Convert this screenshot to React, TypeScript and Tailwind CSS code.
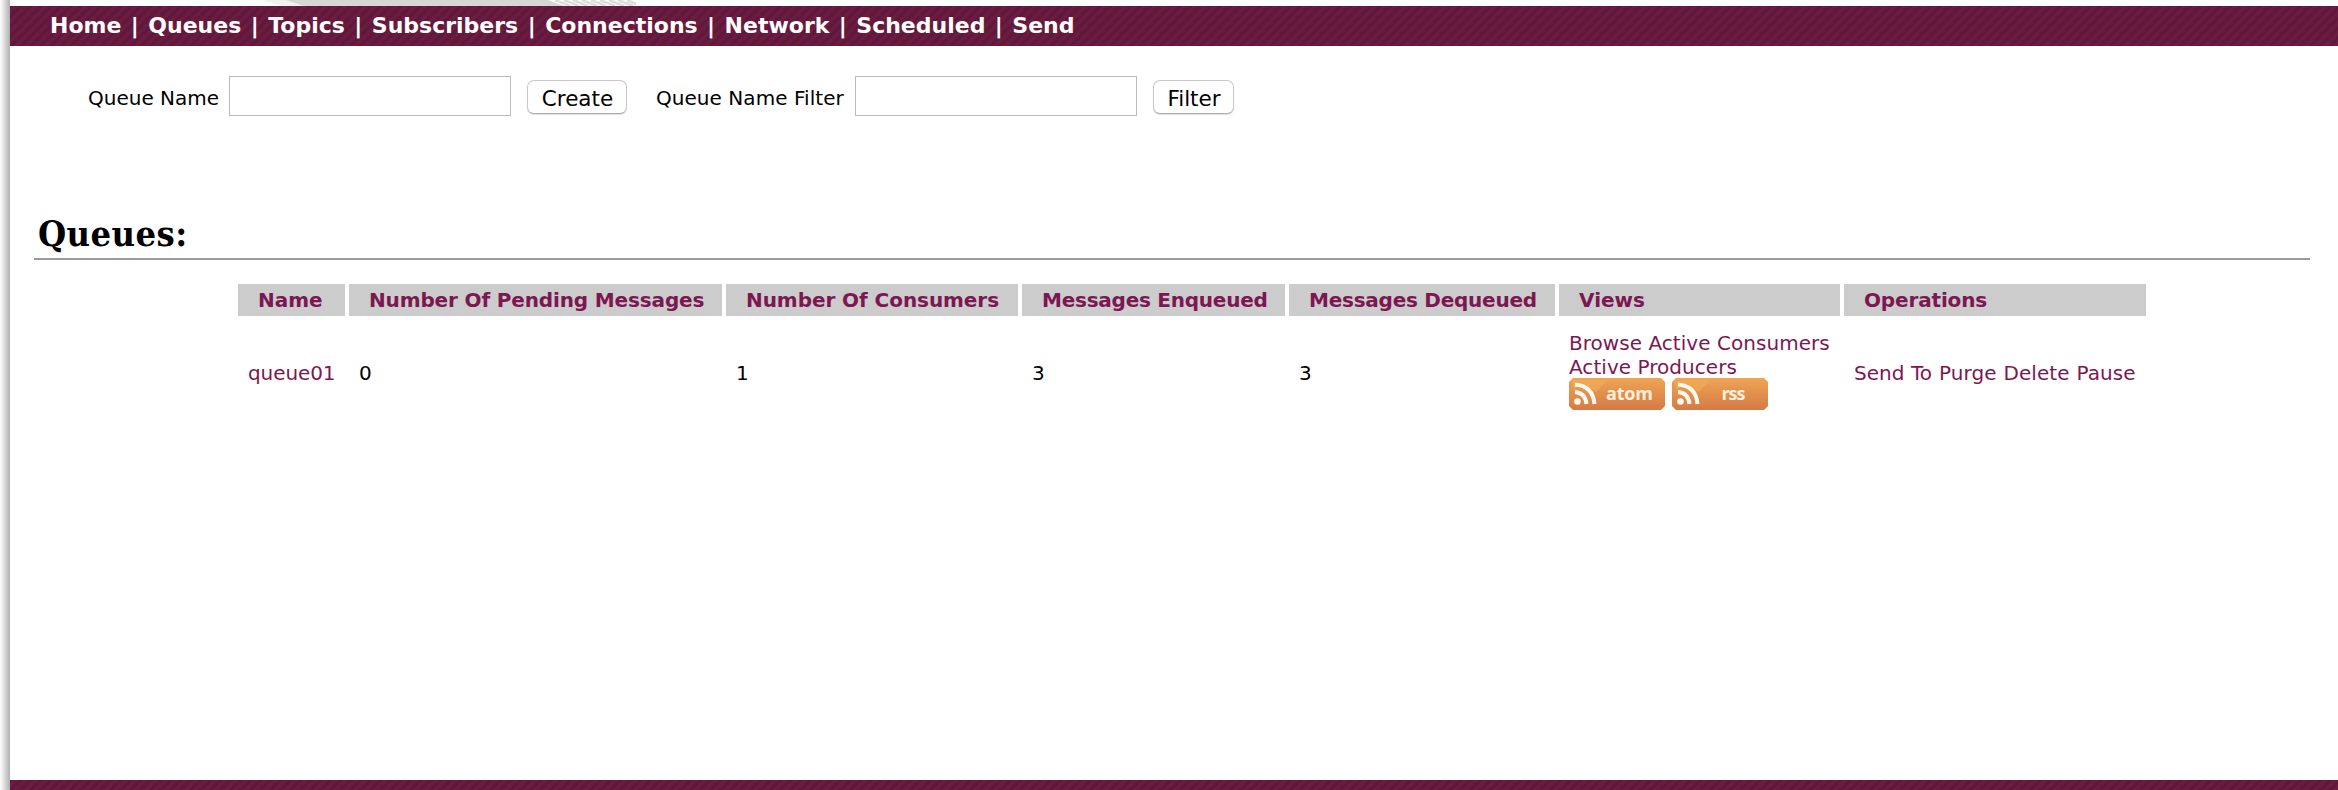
import type { ReactNode } from "react";

const navItems = ["Home", "Queues", "Topics", "Subscribers", "Connections", "Network", "Scheduled", "Send"];

const stripes =
  "bg-[#691b40] bg-[repeating-linear-gradient(135deg,#601739_0px,#601739_1px,#6a1c41_3px,#6a1c41_5px,#601739_7.07px)]";

function Link({ children }: { children: ReactNode }) {
  return <a className="text-[#7d1752]">{children}</a>;
}

function FeedBadge({ label, id }: { label: string; id: string }) {
  return (
    <svg width="96" height="32" viewBox="0 0 96 32" className="block">
      <defs>
        <linearGradient id={id} x1="0" y1="0" x2="0" y2="1">
          <stop offset="0" stopColor="#eea553" />
          <stop offset="1" stopColor="#d57a45" />
        </linearGradient>
      </defs>
      <path d="M4 0H92L96 4V28L92 32H4L0 28V4Z" fill={`url(#${id})`} />
      <path d="M3 2H38L27 14Q14 4 4 12Z" fill="#f1ae58" opacity="0.6" />
      <circle cx="8.5" cy="23.5" r="3.3" fill="#fff8ee" />
      <path d="M6 14Q16.500 15 17.500 26M6 6.500Q24 8 25.500 26" fill="none" stroke="#fff8ee" strokeWidth="4" />
      <text
        x={label === "atom" ? 60.5 : 61.5}
        y="21.500"
        textAnchor="middle"
        fontSize="18"
        fontWeight="700"
        fontFamily="Open Sans, sans-serif"
        fill="#fdeedd"
        textLength={label === "atom" ? 47 : 24}
      >
        {label}
      </text>
    </svg>
  );
}

function Th({ children, className = "" }: { children: ReactNode; className?: string }) {
  return <div className={`h-8 bg-[#ccc] pl-5 font-bold leading-[33px] text-[#7d1752] ${className}`}>{children}</div>;
}

function Button({ children, className }: { children: ReactNode; className: string }) {
  return (
    <button
      className={`h-[34px] rounded-[7px] border border-[#c8c8c8] border-b-[#b0b0b0] bg-white pt-px pl-px text-[21.5px] leading-[33px] shadow-[0_1px_1px_#ddd] ${className}`}
    >
      {children}
    </button>
  );
}

export default function App() {
  return (
    <div className="flex h-[790px] w-[2338px] overflow-hidden bg-white font-['DejaVu_Sans',sans-serif] text-[20px] text-black">
      <div className="w-[10px] shrink-0 bg-linear-to-r from-white to-[#b0b0b0]" />
      <div className="flex min-w-0 flex-1 flex-col">
        <svg width="700" height="6" viewBox="0 0 700 6" className="block shrink-0">
          <path d="M252 0H290L298 6H272Z" fill="#f1f1f1" />
          <path d="M276 0H538L554 6H294Z" fill="#d6d6d6" />
          <path d="M545 0L560 6M554 0L569 6M563 0L578 6M572 0L587 6M581 0L596 6M590 0L605 6M599 0L614 6M608 0L623 6M617 0L626 4" stroke="#dcdcdc" strokeWidth="2.500" />
        </svg>
        <nav className={`flex h-10 shrink-0 pl-10 text-[22px] font-bold leading-[40px] whitespace-pre text-white [word-spacing:1.8px] ${stripes}`}>
          {navItems.join(" | ")}
        </nav>
        <form className="flex h-[70px] shrink-0 items-end">
          <label className="ml-[78px] w-[141px] leading-[35px]">Queue Name</label>
          <input className="h-10 w-[282px] border border-[#bbb]" />
          <Button className="mb-0.5 ml-4 w-[100px]">Create</Button>
          <label className="ml-[29px] w-[199px] leading-[35px] tracking-[0.05px]">Queue Name Filter</label>
          <input className="h-10 w-[282px] border border-[#bbb]" />
          <Button className="mb-0.5 ml-4 w-[81px]">Filter</Button>
        </form>
        <h2 className="mr-7 ml-6 mt-[92px] h-[52px] shrink-0 border-b-2 border-[#9b9b9b] pl-[4px] font-['DejaVu_Serif_Condensed','DejaVu_Serif',serif] text-[36px] font-bold leading-[50px] tracking-[0.4px] [font-stretch:condensed]">
          Queues:
        </h2>
        <div className="mt-6 ml-[228px] grid grid-cols-[107px_373px_292px_263px_266px_281px_302px] gap-x-1 whitespace-nowrap">
          <Th>Name</Th>
          <Th className="tracking-[-0.14px]">Number Of Pending Messages</Th>
          <Th className="tracking-[-0.06px]">Number Of Consumers</Th>
          <Th className="tracking-[-0.24px]">Messages Enqueued</Th>
          <Th className="tracking-[-0.24px]">Messages Dequeued</Th>
          <Th>Views</Th>
          <Th className="tracking-[-0.15px]">Operations</Th>
          <div className="flex h-[114px] items-center pl-[10px] tracking-[-0.1px]"><Link>queue01</Link></div>
          <div className="flex items-center pl-[10px]">0</div>
          <div className="flex items-center pl-[10px]">1</div>
          <div className="flex items-center pl-[10px]">3</div>
          <div className="flex items-center pl-[10px]">3</div>
          <div className="pt-[15px] pl-[10px] leading-6 tracking-[0.04px]">
            <div><Link>Browse</Link> <Link>Active Consumers</Link></div>
            <div><Link>Active Producers</Link></div>
            <div className="-mt-px flex gap-[7px]">
              <FeedBadge label="atom" id="feed-atom" />
              <FeedBadge label="rss" id="feed-rss" />
            </div>
          </div>
          <div className="flex items-center gap-[7px] pl-[10px] tracking-[0.04px]">
            <Link>Send To</Link> <Link>Purge</Link> <Link>Delete</Link> <Link>Pause</Link>
          </div>
        </div>
        <footer className={`mt-auto h-[10px] shrink-0 ${stripes}`} />
      </div>
    </div>
  );
}
